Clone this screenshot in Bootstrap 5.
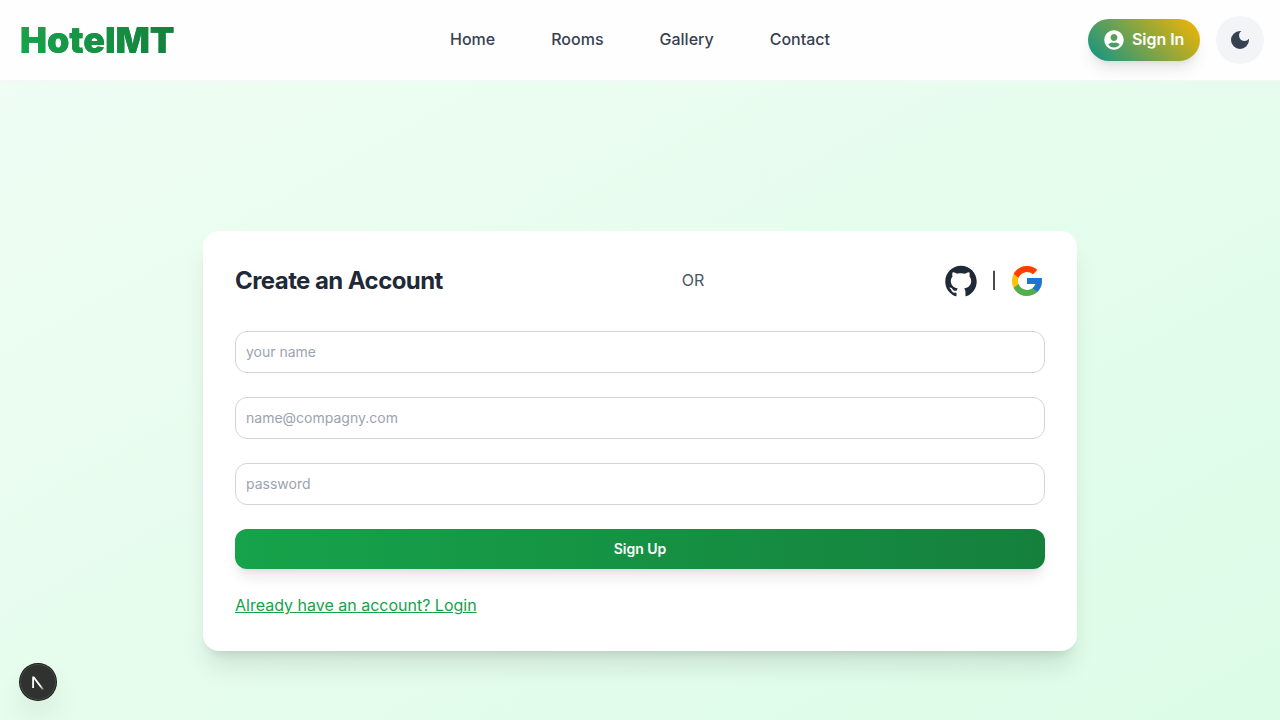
<!DOCTYPE html>
<html lang="en">
<head>
<meta charset="utf-8">
<meta name="viewport" content="width=device-width, initial-scale=1">
<title>HotelMT</title>
<link href="https://cdn.jsdelivr.net/npm/bootstrap@5.3.0/dist/css/bootstrap.min.css" rel="stylesheet">
<style>
body{font-family:Inter,sans-serif;background:linear-gradient(to bottom right,#f0fdf4,#dcfce7);color:#1f2937;height:100vh;overflow:hidden}
.site-head{height:81px;background:#fefefe;border-bottom:1px solid #f5f6f7;padding:0 16px 0 20px}
.brand{font-size:36px;font-weight:900;letter-spacing:-.12px;line-height:40px;background:linear-gradient(to right,#16a34a,#15803d);-webkit-background-clip:text;background-clip:text;color:transparent;filter:drop-shadow(.6px 0 0 #178f43)}
.main-nav{gap:56px;margin:0 4px 2px 0}
.main-nav .nav-link{font-weight:500;color:#374151;line-height:24px;padding:0}
.head-side{flex:1 1 0}
.sign-btn{width:112px;height:42px;padding:0 16px;font-weight:600;letter-spacing:-.05px;white-space:nowrap;color:#fff;background:linear-gradient(45deg,#0d9488,#eab308 95%);box-shadow:0 10px 15px -3px rgba(0,0,0,.1),0 4px 6px -4px rgba(0,0,0,.1)}
.sign-btn svg{flex-shrink:0}
.sign-btn span{padding-bottom:2px}
.theme-btn{width:48px;height:48px;background:#f3f4f6;color:#374151}
.panel{width:874px;height:420px;padding:32px;border-radius:16px;box-shadow:0 20px 25px -5px rgba(0,0,0,.1),0 8px 10px -6px rgba(0,0,0,.1);margin-top:150px}
.panel-head{height:36px;margin-bottom:32px}
.panel-head h1{font-size:24px;line-height:32px;font-weight:700;letter-spacing:-.57px}
.or{color:#4b5563;padding-bottom:2px}
.bar{width:30px;text-align:center;font-size:16px;font-weight:500;line-height:24px;padding-bottom:3px;color:#111;will-change:transform}
.panel .form-control{height:42px;border-radius:12px;border:1px solid #d1d5db;font-size:14px;padding:9px 10px 11px;line-height:20px}
.panel .form-control::placeholder{color:#9ca3af}
.up-btn{height:40px;border-radius:12px;background:linear-gradient(to right,#16a34a,#15803d);color:#fff;font-size:14px;font-weight:600;line-height:20px;box-shadow:0 10px 15px -3px rgba(0,0,0,.1),0 4px 6px -4px rgba(0,0,0,.1)}
.login-link{color:#16a34a;line-height:24px}
.dev-badge{left:20px;bottom:20px;width:36px;height:36px;background:#2f322f;box-shadow:0 0 0 1px #171717,inset 0 0 0 1px #454845,0 16px 32px -8px rgba(0,0,0,.24)}
</style>
</head>
<body class="d-flex flex-column">
<header class="site-head d-flex align-items-center flex-shrink-0">
  <div class="head-side d-flex"><a href="#" class="brand text-decoration-none">HotelMT</a></div>
  <nav class="nav main-nav">
    <a class="nav-link" href="#">Home</a><a class="nav-link" href="#">Rooms</a><a class="nav-link" href="#">Gallery</a><a class="nav-link" href="#">Contact</a>
  </nav>
  <div class="head-side d-flex justify-content-end align-items-center gap-3">
    <button class="btn border-0 rounded-pill sign-btn d-flex align-items-center gap-2">
      <svg width="20" height="20" viewBox="0 0 496 512" fill="currentColor"><path d="M248 8C111 8 0 119 0 256s111 248 248 248 248-111 248-248S385 8 248 8zm0 96c48.6 0 88 39.4 88 88s-39.4 88-88 88-88-39.4-88-88 39.4-88 88-88zm0 344c-58.7 0-111.3-26.6-146.5-68.2 18.8-35.4 55.6-59.8 98.5-59.8 2.4 0 4.8.4 7.1 1.1 13 4.2 26.6 6.9 40.9 6.9 14.3 0 28-2.7 40.9-6.9 2.3-.7 4.7-1.1 7.1-1.1 42.9 0 79.7 24.4 98.5 59.8C359.3 421.4 306.7 448 248 448z"/></svg>
      <span>Sign In</span>
    </button>
    <button class="btn border-0 rounded-circle theme-btn p-0 d-flex align-items-center justify-content-center" aria-label="Dark mode">
      <svg width="24" height="24" viewBox="0 0 24 24" fill="currentColor"><path d="M12 3a9 9 0 109 9c0-.46-.04-.92-.1-1.36a5.389 5.389 0 01-4.4 2.26 5.403 5.403 0 01-3.14-9.8c-.44-.06-.9-.1-1.36-.1z"/></svg>
    </button>
  </div>
</header>
<main class="flex-grow-1">
  <section class="panel bg-white mx-auto">
    <div class="panel-head d-flex align-items-center justify-content-between">
      <h1 class="mb-0">Create an Account</h1>
      <span class="or">OR</span>
      <div class="d-flex align-items-center">
        <svg width="36" height="36" viewBox="0 0 1024 1024" fill="currentColor"><path d="M511.6 76.3C264.3 76.2 64 276.4 64 523.5 64 718.9 189.3 885 363.8 946c23.5 5.9 19.9-10.8 19.9-22.2v-77.5c-135.7 15.9-141.2-73.9-150.3-88.9C215 726 171.5 718 184.5 703c30.9-15.9 62.4 4 98.9 57.9 26.4 39.1 77.9 32.5 104 26 5.7-23.5 17.9-44.5 34.7-60.8-140.6-25.2-199.2-111-199.2-213 0-49.5 16.3-95 48.3-131.7-20.4-60.5 1.9-112.3 4.9-120 58.1-5.2 118.5 41.6 123.2 45.3 33-8.9 70.7-13.6 112.9-13.6 42.4 0 80.2 4.9 113.5 13.9 11.3-8.6 67.3-48.8 121.3-43.9 2.9 7.7 24.7 58.3 5.5 118 32.4 36.8 48.9 82.7 48.9 132.3 0 102.2-59 188.1-200 212.9a127.5 127.5 0 0 1 38.1 91v112.5c.8 9 0 17.9 15 17.9 177.1-59.7 304.6-227 304.6-424.1 0-247.2-200.4-447.3-447.5-447.3z"/></svg>
        <span class="bar">|</span>
        <svg width="36" height="36" viewBox="0 0 48 48"><path fill="#FFC107" d="M43.611,20.083H42V20H24v8h11.303c-1.649,4.657-6.08,8-11.303,8c-6.627,0-12-5.373-12-12c0-6.627,5.373-12,12-12c3.059,0,5.842,1.154,7.961,3.039l5.657-5.657C34.046,6.053,29.268,4,24,4C12.955,4,4,12.955,4,24c0,11.045,8.955,20,20,20c11.045,0,20-8.955,20-20C44,22.659,43.862,21.35,43.611,20.083z"/><path fill="#FF3D00" d="M6.306,14.691l6.571,4.819C14.655,15.108,18.961,12,24,12c3.059,0,5.842,1.154,7.961,3.039l5.657-5.657C34.046,6.053,29.268,4,24,4C16.318,4,9.656,8.337,6.306,14.691z"/><path fill="#4CAF50" d="M24,44c5.166,0,9.86-1.977,13.409-5.192l-6.19-5.238C29.211,35.091,26.715,36,24,36c-5.202,0-9.619-3.317-11.283-7.946l-6.522,5.025C9.505,39.556,16.227,44,24,44z"/><path fill="#1976D2" d="M43.611,20.083H42V20H24v8h11.303c-0.792,2.237-2.231,4.166-4.087,5.571l6.193,5.238C36.971,39.205,44,34,44,24C44,22.659,43.862,21.35,43.611,20.083z"/></svg>
      </div>
    </div>
    <form class="d-flex flex-column gap-4">
      <input class="form-control" placeholder="your name">
      <input class="form-control" placeholder="name@compagny.com">
      <input class="form-control" type="password" placeholder="password">
      <button type="button" class="btn border-0 up-btn">Sign Up</button>
      <a class="login-link align-self-start" href="#">Already have an account? Login</a>
    </form>
  </section>
</main>
<div class="dev-badge position-fixed rounded-circle d-flex align-items-center justify-content-center">
  <svg width="36" height="36" viewBox="0 0 36 36"><defs><linearGradient id="ng" x1="14" y1="13" x2="24" y2="26" gradientUnits="userSpaceOnUse"><stop stop-color="#fff"/><stop offset=".65" stop-color="#fff"/><stop offset="1" stop-color="#fff" stop-opacity=".2"/></linearGradient></defs><path fill="url(#ng)" d="M12.2 12.4h2l9.6 12.5-1.5 1.2L14 15.3V24h-1.8z"/></svg>
</div>
<script src="https://cdn.jsdelivr.net/npm/bootstrap@5.3.0/dist/js/bootstrap.bundle.min.js"></script>
</body>
</html>
